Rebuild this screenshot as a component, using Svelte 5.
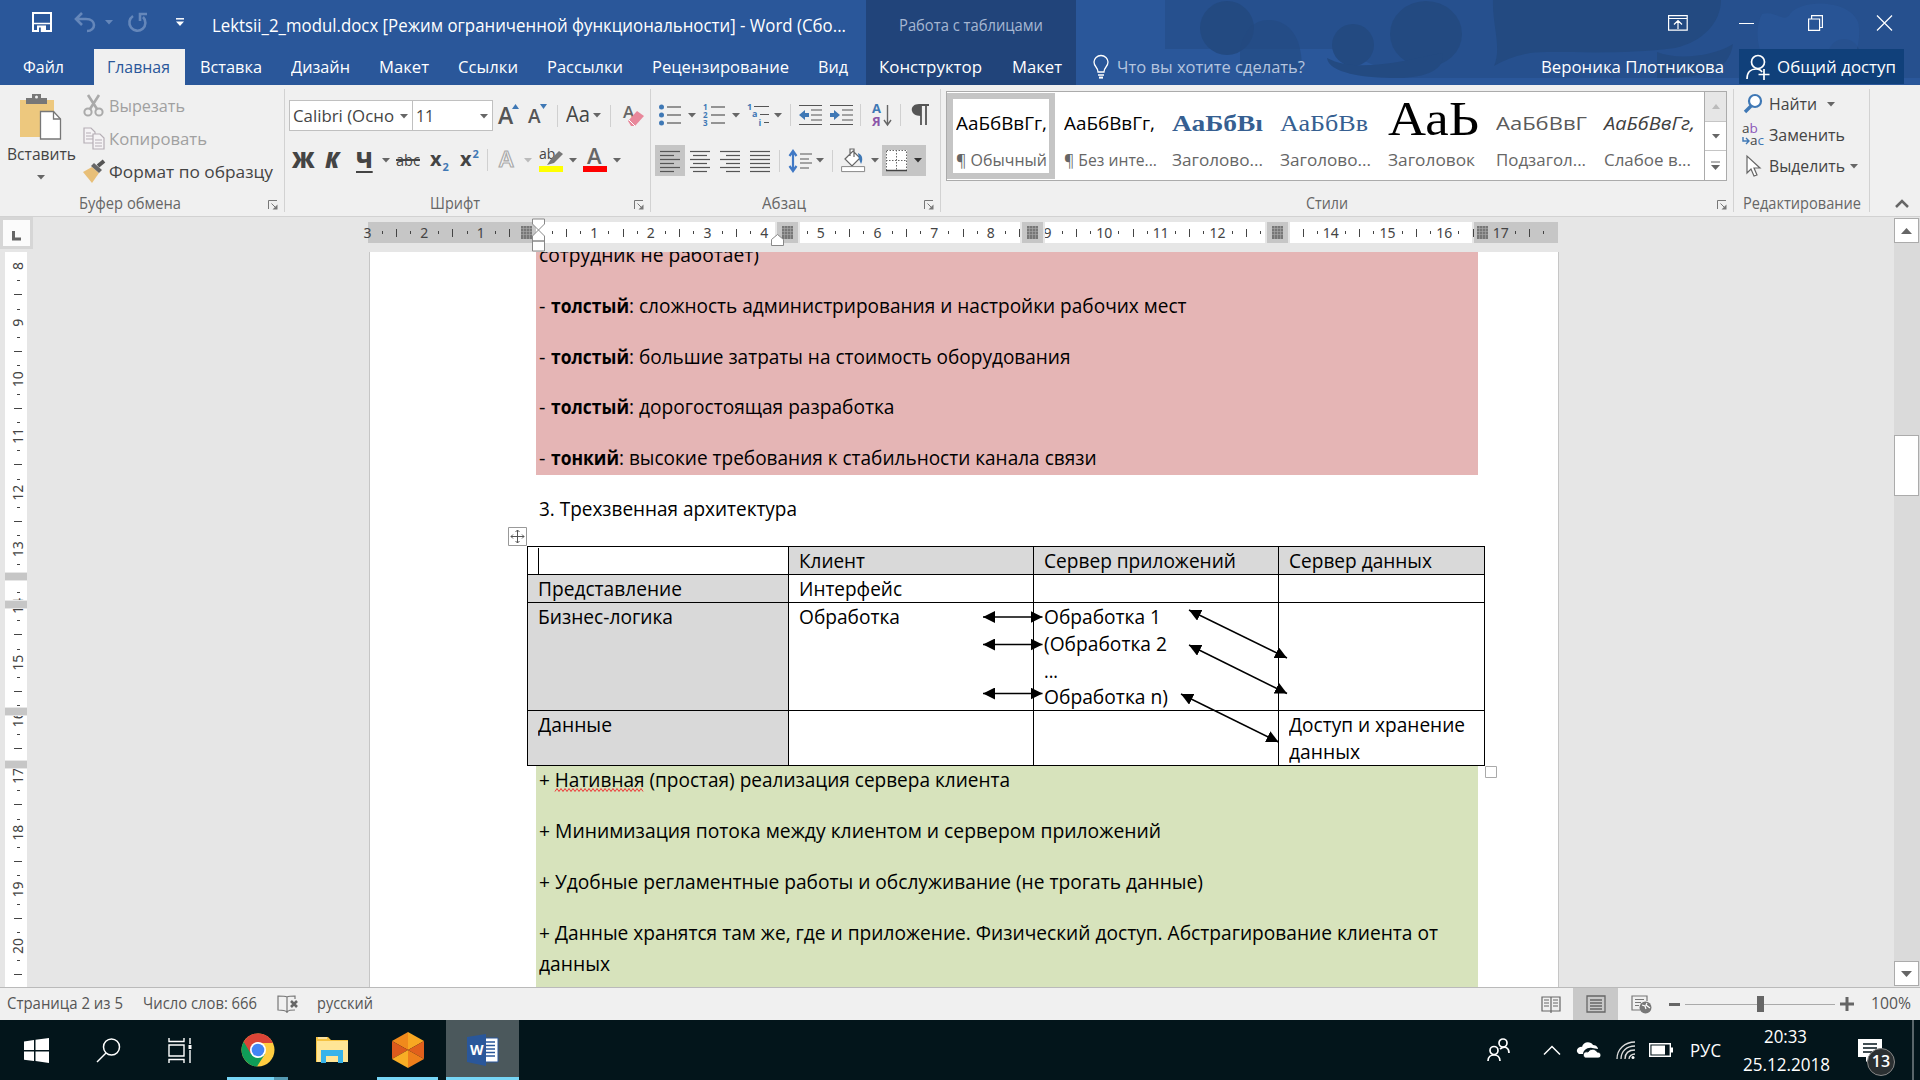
<script>
  // Condenses a label horizontally so it occupies its slot width exactly.
  function fit(node, width) {
    const natural = node.getBoundingClientRect().width;
    if (natural > 0) node.style.transform = `scaleX(${width / natural})`;
  }

  const tabs = [
    { t: 'Вставка', w: 62 }, { t: 'Дизайн', w: 59 }, { t: 'Макет', w: 50 },
    { t: 'Ссылки', w: 60 }, { t: 'Рассылки', w: 76 }, { t: 'Рецензирование', w: 137 }, { t: 'Вид', w: 30 }
  ];
  const styles = [
    { p: 'АаБбВвГг,', pw: 91, n: '¶ Обычный', w: 91, c: 'body sel' },
    { p: 'АаБбВвГг,', pw: 91, n: '¶ Без инте...', w: 93, c: 'body' },
    { p: 'АаБбВı', pw: 91, n: 'Заголово...', w: 91, c: 'h1' },
    { p: 'АаБбВв', pw: 88, n: 'Заголово...', w: 91, c: 'h2' },
    { p: 'АаЬ', pw: 91, n: 'Заголовок', w: 87, c: 'title' },
    { p: 'АаБбВвГ', pw: 91, n: 'Подзагол...', w: 90, c: 'sub' },
    { p: 'АаБбВвГг,', pw: 91, n: 'Слабое в...', w: 87, c: 'weak' }
  ];
  const UNIT = 56.67;
  const hNums = [-3, -2, -1, 1, 2, 3, 4, 5, 6, 7, 8, 9, 10, 11, 12, 14, 15, 16, 17].map((n) => ({ n: Math.abs(n), x: 169.5 + n * UNIT }));
  const hTicks = [];
  for (let q = -11; q <= 71; q++) if (q % 4 !== 0) hTicks.push({ x: Math.round(169.5 + (q * UNIT) / 4), half: q % 2 === 0 });
  const hStops = [409, 654, 899];
  const vNums = [8, 9, 10, 11, 12, 13, 14, 15, 16, 17, 18, 19, 20].map((n) => ({ n, y: 14 + (n - 8) * UNIT }));
  const vTicks = [];
  for (let q = 33; q <= 82; q++) if (q % 4 !== 0) vTicks.push({ y: Math.round(14 + ((q - 32) * UNIT) / 4), half: q % 2 === 0 });
  const vBands = [321, 349, 456, 509];

  const cons = [
    { b: 'толстый', bw: 78, t: ': сложность администрирования и настройки рабочих мест', w: 647 },
    { b: 'толстый', bw: 78, t: ': большие затраты на стоимость оборудования', w: 531 },
    { b: 'толстый', bw: 78, t: ': дорогостоящая разработка', w: 355 },
    { b: 'тонкий', bw: 68, t: ': высокие требования к стабильности канала связи', w: 557 }
  ];
  const arrows = [
    [983, 617, 1042.5, 617], [983, 644.5, 1042.5, 644.5], [983, 693.5, 1042.5, 693.5],
    [1189, 610, 1287, 658], [1189, 645, 1287, 693.5], [1181, 694, 1278.5, 742]
  ];
</script>

{#snippet tx(text, w)}<span class="t" style:width="{w}px"><span use:fit={w}>{text}</span></span>{/snippet}
{#snippet caret(c = '#666')}<svg class="caret" width="8" height="5"><path d="M0 0h8L4 4.6z" fill={c} /></svg>{/snippet}
{#snippet launcher()}<svg class="launcher" width="10" height="10"><path d="M.5 9V.5H9M3.500 3.500 8 8" stroke="#777" fill="none" /><path d="M9.500 4.500v5h-5z" fill="#777" /></svg>{/snippet}
{#snippet sep()}<i class="sep"></i>{/snippet}
{#snippet lines(xs)}<svg width="20" height="22">{#each xs as [a, b], i}<path d="M{a} {i * 4 + 1.5}H{b}" stroke="#555" stroke-width="1.2" />{/each}</svg>{/snippet}

<div class="app">
  <header>
    <svg class="art" width="1920" height="78">
      <path d="M1165 0H1920V78H1400L1340 49H1165z" fill="#264e89" opacity=".75" />
      <g fill="#234a81">
        <ellipse cx="1227" cy="28" rx="27" ry="27" /><path d="M1240 49c5-22 18-34 40-27 18 8 22 27 22 49h-62z" opacity=".6" />
        <ellipse cx="1426" cy="34" rx="36" ry="33" /><circle cx="1353" cy="45" r="21" /><path d="M1327 58c30 16 80 2 115-5 4 16-15 25-45 25-34 0-68-5-70-20z" />
        <path d="M1493 0H1721c0 22-18 42-46 48-60 8-120 2-145 5-15 3-25 7-36 13 8-18-2-42-1-66z" />
        <path d="M1657 52c20 8 55 5 76-8-4 28-30 34-76 34z" /><circle cx="1844" cy="55" r="16" />
      </g>
      <path d="M1762 14c14-4 22 10 28 0 12-16 60-14 68 8 4 14-2 40-14 56h-70c-14-16-22-46-12-64z" fill="#2a579a" opacity=".6" />
    </svg>
    <div class="titlebar">
      <div class="qat">
        <svg width="20" height="20"><path d="M1 1h18v18H1z" fill="none" stroke="#fff" stroke-width="2" /><path d="M2 11.500h16" stroke="#fff" stroke-width="1.500" /><path d="M5 13.500h9V20H5z" fill="#fff" /><path d="M7 15.500h1.800V20H7z" fill="#2a579a" /></svg>
        <svg width="22" height="20" stroke="#6587ba" fill="none" stroke-width="2.600"><path d="M8 1 2 7l6 6M2 7h10c11 0 10 12 1 12" /></svg>
        {@render caret('#6587ba')}
        <svg width="20" height="20" stroke="#6587ba" fill="none" stroke-width="2.600"><path d="M5 4a8 8 0 1 0 10 1M12 9V2h7" /></svg>
        <svg width="8" height="8"><path d="M0 .8h8" stroke="#fff" stroke-width="1.500" /><path d="M0 3.500h8L4 8z" fill="#fff" /></svg>
      </div>
      <div class="doctitle">{@render tx('Lektsii_2_modul.docx [Режим ограниченной функциональности] - Word (Сбо...', 634)}</div>
      <div class="ctx">{@render tx('Работа с таблицами', 144)}</div>
      <div class="win">
        <svg width="20" height="16" stroke="#fff" fill="none" stroke-width="1.200"><path d="M.6.6h18.600v14.600H.6zM.6 3.500h18.600M10 14V6M6 9.500l4-4 4 4" /></svg>
        <svg width="15" height="16" stroke="#fff"><path d="M0 8.500h15" /></svg>
        <svg width="15" height="16" stroke="#fff" fill="none" stroke-width="1.200"><path d="M.6 4h11v11.400H.6zM3.600 4V.6h10.800v11.900h-3" /></svg>
        <svg width="15" height="16" stroke="#fff" stroke-width="1.200"><path d="M0 .5 15 15.500M15 .5 0 15.500" /></svg>
      </div>
    </div>
    <nav>
      <div class="file">{@render tx('Файл', 41)}</div>
      <div class="tab active">{@render tx('Главная', 63)}</div>
      {#each tabs as tab}<div class="tab">{@render tx(tab.t, tab.w)}</div>{/each}
      <div class="ctxtabs">{@render tx('Конструктор', 103)}{@render tx('Макет', 50)}</div>
      <div class="tell">
        <svg width="16" height="24" stroke="#fff" fill="none" stroke-width="1.300"><path d="M5 17c0-5-4-5-4-10a7 6.500 0 0 1 14 0c0 5-4 5-4 10zM5 20h6" /><path d="M6 22.600h4" stroke-width="2" /></svg>
        {@render tx('Что вы хотите сделать?', 188)}
      </div>
      <div class="user">{@render tx('Вероника Плотникова', 183)}</div>
      <div class="share">
        <svg width="24" height="26" stroke="#fff" fill="none" stroke-width="1.700"><circle cx="12" cy="8" r="6.500" /><path d="M1 25c0-7 4-10 9-10 3 0 5 1 6 3M18 15v11M12.500 20.500h11" /></svg>
        {@render tx('Общий доступ', 119)}
      </div>
    </nav>
  </header>

  <section class="ribbon">
    <div class="group clip">
      <div class="clipbody">
        <div class="paste">
          <svg width="42" height="46"><path d="M0 6h34v37H0z" fill="#edc87e" /><path d="M6 4h6V0h9v4h6v6H6z" fill="#777" /><circle cx="16.500" cy="3" r="1.500" fill="#f0f0f0" /><path d="M20.500 17.500h13l7 7.500v20h-20z" fill="#fff" stroke="#777" stroke-width="1.300" /><path d="M33.500 17.500V25h7" fill="none" stroke="#777" stroke-width="1.300" /></svg>
          {@render tx('Вставить', 69)}
          {@render caret()}
        </div>
        <div class="cliplist">
          <div class="dis"><svg width="22" height="23" fill="none" stroke="#aaa" stroke-width="2"><path d="M5 1l9 14M16 1 7 15" stroke-width="2.600" /><circle cx="5" cy="18" r="3.600" /><circle cx="16" cy="18" r="3.600" /></svg>{@render tx('Вырезать', 76)}</div>
          <div class="dis"><svg width="22" height="23" fill="#f5f3f5" stroke="#b5aeb5" stroke-width="1.200"><path d="M1 1h7l4 4v11H1zM3 6h5M3 9h7M3 12h7" /><path d="M10 7h7l4 4v11H10zM12 13h7M12 16h7M12 19h7" /></svg>{@render tx('Копировать', 98)}</div>
          <div><svg width="22" height="23"><path d="M0 12 9 7l7 6-7 10z" fill="#e8bf78" /><path d="M8 6l3-3 8 7-3 3z" fill="#666" /><path d="M15 6 21 1" stroke="#555" stroke-width="4" /></svg>{@render tx('Формат по образцу', 164)}</div>
        </div>
      </div>
      <footer>{@render tx('Буфер обмена', 102)}{@render launcher()}</footer>
    </div>

    <div class="group font">
      <div class="frow1">
        <div class="combo">{@render tx('Calibri (Осно', 101)}{@render caret()}</div>
        <div class="combo size">{@render tx('11', 18)}{@render caret()}</div>
        <b class="big">A<svg width="7" height="5"><path d="M0 5 3.500 0 7 5z" fill="#3f78b5" /></svg></b>
        <b class="big sm">A<svg width="7" height="5"><path d="M0 0h7L3.500 5z" fill="#3f78b5" /></svg></b>
        {@render sep()}
        <span class="aa">{@render tx('Aa', 24)}</span>{@render caret()}
        {@render sep()}
        <svg width="21" height="24"><text x="0" y="14" font-size="17" fill="#666" font-weight="600">A</text><path d="M5 17 14 7l7 5-9 10H8z" fill="#e8879a" /><path d="m6 16 6 6" stroke="#fff" /></svg>
      </div>
      <div class="frow2">
        <b>Ж</b><b class="it">К</b><b class="un">Ч</b>{@render caret()}
        <span class="strike">{@render tx('abc', 24)}</span>
        <b class="x">x<sub>2</sub></b><b class="x">x<sup>2</sup></b>
        {@render sep()}
        <svg width="18" height="24"><text x="0" y="19" font-size="22" font-weight="600" fill="#f8f8f8" stroke="#aaa" stroke-width="1.200">A</text></svg>{@render caret('#bbb')}
        <svg width="24" height="25"><text x="0" y="11" font-size="14" fill="#444">ab</text><path d="M8 17l4-6 8-8 4 3-9 9z" fill="#777" /><path d="M0 18h24v6H0z" fill="#ff0" /></svg>{@render caret()}
        <svg width="24" height="25"><text x="4" y="16" font-size="22" font-weight="600" fill="#666">A</text><path d="M0 18h24v6H0z" fill="red" /></svg>{@render caret()}
      </div>
      <footer>{@render tx('Шрифт', 50)}{@render launcher()}</footer>
    </div>

    <div class="group para">
      <div class="prow1">
        <svg width="22" height="22">{#each [3, 11, 19] as y}<circle cx="2.500" cy={y} r="2.500" fill="#3f78b5" /><path d="M8 {y}h14" stroke="#555" stroke-width="1.200" />{/each}</svg>{@render caret()}
        <svg width="22" height="22">{#each [3, 11, 19] as y, i}<text x="0" y={y + 3} font-size="8" font-weight="700" fill="#3f78b5">{i + 1}</text><path d="M8 {y}h14" stroke="#555" stroke-width="1.200" />{/each}</svg>{@render caret()}
        <svg width="22" height="22" stroke="#555" stroke-width="1.200"><path d="M7 2.500h15M13 10.500h9M17 18.500h5" /><g stroke="none" fill="#3f78b5" font-size="9" font-weight="700"><text x="0" y="6">1</text><text x="5" y="13">a</text><text x="11.500" y="22">i</text></g></svg>{@render caret()}
        {@render sep()}
        <svg width="23" height="22"><path d="M0 1.500h23M12 6h11M12 11h11M12 16h11M0 20.500h23" stroke="#555" stroke-width="1.200" /><path d="M0 11 6 6v3h4v4H6v3z" fill="#3f78b5" /></svg>
        <svg width="23" height="22"><path d="M0 1.500h23M12 6h11M12 11h11M12 16h11M0 20.500h23" stroke="#555" stroke-width="1.200" /><path d="M10 11 4 6v3H0v4h4v3z" fill="#3f78b5" /></svg>
        {@render sep()}
        <svg width="20" height="24"><text x="0" y="10" font-size="13" font-weight="700" fill="#3f78b5">А</text><text x="0" y="23" font-size="13" font-weight="700" fill="#8b55a8">Я</text><path d="M15.500 2v19M12 17l3.500 5 3.500-5" stroke="#666" fill="none" stroke-width="1.400" /></svg>
        {@render sep()}
        <svg width="17" height="22"><path d="M7 1h10M9 1v20M14 1v20" stroke="#555" stroke-width="1.800" fill="none" /><path d="M9 0v12C-3 12-3 0 7 0z" fill="#555" /></svg>
      </div>
      <div class="prow2">
        <div class="on">{@render lines([[0, 20], [0, 14], [0, 20], [0, 14], [0, 20], [0, 14]])}</div>
        <div>{@render lines([[0, 20], [3, 17], [0, 20], [3, 17], [0, 20], [3, 17]])}</div>
        <div>{@render lines([[0, 20], [6, 20], [0, 20], [6, 20], [0, 20], [6, 20]])}</div>
        <div>{@render lines([[0, 20], [0, 20], [0, 20], [0, 20], [0, 20], [0, 20]])}</div>
        {@render sep()}
        <svg width="23" height="24"><path d="M4 2v20M.5 7 4 2l3.500 5M.5 17 4 22l3.500-5" stroke="#3f78c5" stroke-width="2.200" fill="none" /><path d="M11 5h12M11 10h9M11 14h12M11 19h9" stroke="#555" stroke-width="1.200" /></svg>{@render caret()}
        {@render sep()}
        <svg width="24" height="25"><path d="M4 11 12 3l7 7-8 8zM9 8V1h4v8" fill="#fff" stroke="#666" stroke-width="1.200" /><path d="M17 5c5 2 5 7 3 11l-2-5z" fill="#3f78b5" /><path d="M.6 18.600h23v5H.6z" fill="#fff" stroke="#888" /></svg>{@render caret()}
        <div class="on border"><svg width="21" height="22"><path d="M0 0h21v21H0z" fill="#fff" /><path d="M.5.500h20v20H.5zM10.500 0v20M0 10.500h20" fill="none" stroke="#666" stroke-dasharray="1.500 1.500" /><path d="M0 20.500h21" stroke="#444" stroke-width="1.500" /></svg>{@render caret('#333')}</div>
      </div>
      <footer>{@render tx('Абзац', 44)}{@render launcher()}</footer>
    </div>

    <div class="group styles">
      <div class="gallery">
        <div class="tiles">
          {#each styles as s}
            <div class="tile {s.c}"><div class="prev">{@render tx(s.p, s.pw)}</div><div class="name">{@render tx(s.n, s.w)}</div></div>
          {/each}
        </div>
        <div class="gscroll"><div class="off"><svg width="8" height="5"><path d="M0 5h8L4 0z" fill="#bbb" /></svg></div><div>{@render caret()}</div><div><svg width="9" height="9"><path d="M0 1h9" stroke="#666" /><path d="M0 4h9L4.500 9z" fill="#666" /></svg></div></div>
      </div>
      <footer>{@render tx('Стили', 42)}{@render launcher()}</footer>
    </div>

    <div class="group edit">
      <div class="elist">
        <div><svg width="22" height="22"><circle cx="13" cy="8" r="6" fill="#fff" stroke="#3f78b5" stroke-width="2.200" /><path d="M9 13 3 19" stroke="#3f78b5" stroke-width="3.400" /></svg>{@render tx('Найти', 48)}<span class="gap"></span>{@render caret()}</div>
        <div><svg width="22" height="22"><text x="0" y="9" font-size="13.500" fill="#444">a<tspan fill="#8b55b8">b</tspan></text><text x="8" y="21" font-size="13.500" fill="#444">a<tspan fill="#3f78b5">c</tspan></text><path d="M1 13v4h6M4 14l3 3-3 3" stroke="#3f78b5" fill="none" stroke-width="1.400" /></svg>{@render tx('Заменить', 76)}</div>
        <div><svg width="22" height="22"><path d="M5 1v17l4-4 3 7 3-1-3-7h6z" fill="#fff" stroke="#666" stroke-width="1.200" /></svg>{@render tx('Выделить', 76)}{@render caret()}</div>
      </div>
      <footer>{@render tx('Редактирование', 118)}</footer>
    </div>
    <div class="collapse"><svg width="14" height="9"><path d="M1 8l6-6 6 6" fill="none" stroke="#666" stroke-width="2.500" /></svg></div>
  </section>

  <main>
    <aside>
      <div class="tabsel"><svg width="9" height="10"><path d="M1.500 0v8H9" fill="none" stroke="#666" stroke-width="3" /></svg></div>
      <svg class="vruler" width="22" height="735">
        <path d="M0 0h22v735H0z" fill="#fff" />
        {#each vTicks as t}<path d="M{t.half ? 9 : 12} {t.y + 0.500}H{t.half ? 17 : 15}" stroke="#444" />{/each}
        {#each vNums as n}<text transform="translate(17.500 {n.y}) rotate(-90)" text-anchor="middle" font-size="14" fill="#444">{n.n}</text>{/each}
        {#each vBands as y}<path d="M0 {y - 1}h22v9H0z" fill="#e6e6e6" /><path d="M0 {y}h22v7H0z" fill="#c6c6c6" />{/each}
      </svg>
    </aside>
    <div class="sheet">
      <svg class="hruler" width="1190" height="35">
        <path d="M0 5h1190v21H0z" fill="#fff" /><path d="M0 5h168v21H0z" fill="#c6c6c6" />
        <path d="M1104 5h2v21h-2z" fill="#e6e6e6" /><path d="M1106 5h84v21h-84z" fill="#c6c6c6" />
        {#each hTicks as t}<path d="M{t.x + 0.500} {t.half ? 12 : 14}V{t.half ? 20 : 17}" stroke="#444" />{/each}
        {#each hNums as n}<text x={n.x} y="21" text-anchor="middle" font-size="14" fill="#444">{n.n}</text>{/each}
        {#each hStops as x}<path d="M{x - 2} 5h25v21h-25z" fill="#e6e6e6" /><path d="M{x} 5h21v21h-21z" fill="#c6c6c6" />{/each}
        <g fill="#777">{#each [153, 414, 659, 904, 1109] as x}<path d="M{x} 9h11v13h-11z" /><path d="M{x + 2.500} 9v13M{x + 5.500} 9v13M{x + 8.500} 9v13M{x} 11.500h11M{x} 14.500h11M{x} 17.500h11" stroke="#aaa" stroke-width=".6" />{/each}</g>
        <g fill="#fff" stroke="#888"><path d="M164.500 2.500h12v5l-6 6-6-6zM170.500 13.500l6 6v5h-12v-5zM164.500 24.500v10h12v-10z" transform="translate(0 -.5)" /><path d="M409.500 17.500l6 5v6h-12v-6z" /></g>
      </svg>
      <div class="page">
        <div class="pink">
          <p>{@render tx('сотрудник не работает)', 220)}</p>
          {#each cons as c}<p class="row"><span class="dash">-</span><b>{@render tx(c.b, c.bw)}</b>{@render tx(c.t, c.w - c.bw - 11.5)}</p>{/each}
        </div>
        <p class="head">{@render tx('3. Трехзвенная архитектура', 258)}</p>
        <div class="table">
          <div></div><div class="g">{@render tx('Клиент', 66)}</div><div class="g">{@render tx('Сервер приложений', 192)}</div><div class="g">{@render tx('Сервер данных', 143)}</div>
          <div class="g">{@render tx('Представление', 144)}</div><div>{@render tx('Интерфейс', 103)}</div><div></div><div></div>
          <div class="g">{@render tx('Бизнес-логика', 135)}</div><div>{@render tx('Обработка', 101)}</div>
          <div>{@render tx('Обработка 1', 117)}{@render tx('(Обработка 2', 123)}{@render tx('...', 14)}{@render tx('Обработка n)', 124)}</div><div></div>
          <div class="g">{@render tx('Данные', 74)}</div><div></div><div></div><div>{@render tx('Доступ и хранение', 176)}{@render tx('данных', 71)}</div>
        </div>
        <div class="green">
          <p class="first">{@render tx('+ Нативная (простая) реализация сервера клиента', 471)}</p>
          <p>{@render tx('+ Минимизация потока между клиентом и сервером приложений', 622)}</p>
          <p>{@render tx('+ Удобные регламентные работы и обслуживание (не трогать данные)', 664)}</p>
          <p>{@render tx('+ Данные хранятся там же, где и приложение. Физический доступ. Абстрагирование клиента от', 899)}</p>
          <p class="cont">{@render tx('данных', 71)}</p>
        </div>
        <svg class="marks" width="1188" height="735" viewBox="370 252 1188 735">
          <defs><marker id="tip" viewBox="0 0 12 12" refX="12" refY="6" markerWidth="12" markerHeight="12" markerUnits="userSpaceOnUse" orient="auto-start-reverse"><path d="M0 0 12 6 0 12z" /></marker></defs>
          {#each arrows as [a, b, c, d]}<line x1={a} y1={b} x2={c} y2={d} stroke="#000" stroke-width="1.500" marker-start="url(#tip)" marker-end="url(#tip)" />{/each}
          <path d="M538.500 548v26" stroke="#000" />
          <path d="M508.500 527.500h18v18h-18z" fill="#fff" stroke="#999" /><path d="M517.500 530v13M511 536.500h13M515.500 532l2-2 2 2M515.500 541l2 2 2-2M513 534.500l-2 2 2 2M522 534.500l2 2-2 2" stroke="#555" fill="none" />
          <path d="M1485.500 766.500h11v11h-11z" fill="#fff" stroke="#aaa" />
          <path d="M555 791.500{'l2-3 2 3'.repeat(22)}" fill="none" stroke="#e33" />
        </svg>
      </div>
    </div>
    <div class="vscroll"><div class="btn"><svg width="11" height="6"><path d="M0 6h11L5.500 0z" fill="#666" /></svg></div><div class="thumb"></div><div class="btn"><svg width="11" height="6"><path d="M0 0h11L5.500 6z" fill="#666" /></svg></div></div>
  </main>

  <section class="status">
    <div class="sleft">
      {@render tx('Страница 2 из 5', 116)}{@render tx('Число слов: 666', 114)}
      <svg width="22" height="18" fill="none" stroke="#777" stroke-width="1.200"><path d="M10 2v16M10 2C8 1 5 1 1 1v14c4 0 7 0 9 2 2-2 3-2 8-2M10 2c2-1 5-1 8-1v3" /><path d="m14 6 6 6M20 6l-6 6" stroke-width="2.600" stroke="#666" /></svg>
      <span class="lang">{@render tx('русский', 56)}</span>
    </div>
    <div class="sright">
      <svg width="20" height="18" fill="none" stroke="#666" stroke-width="1.200"><path d="M10 2v16M10 2H1v14h9M10 2h9v14h-9M3 5h5M3 8h5M3 11h5M12 5h5M12 8h5M12 11h5" /></svg>
      <div class="view"><svg width="20" height="18" fill="none" stroke="#666" stroke-width="1.300"><path d="M1 1h18v16H1zM4 5h12M4 8h12M4 11h12M4 14h12" /></svg></div>
      <svg width="21" height="19" fill="none" stroke="#777" stroke-width="1.200"><path d="M9 15H1V1h15v5M4 4.500h9M4 7.500h6M4 10.500h4" /><circle cx="14.500" cy="12.500" r="6" fill="#777" stroke="none" /><path d="m11 10 3 1 1 3M16 8l-1 2 4 3" stroke="#fff" /></svg>
      <i class="minus"></i>
      <div class="zoom"><i></i></div>
      <svg width="14" height="14"><path d="M7 0v14M0 7h14" stroke="#666" stroke-width="3" /></svg>
      {@render tx('100%', 40)}
    </div>
  </section>

  <section class="taskbar">
    <div class="task"><svg width="25" height="25" fill="#fff"><path d="M0 3.500 10 2v10H0zM11.500 1.800 25 0v12H11.500zM0 13.500h10v9.500L0 21.700zM11.500 13.500H25V25l-13.500-2z" /></svg></div>
    <div class="task"><svg width="25" height="25" fill="none" stroke="#fff" stroke-width="1.500"><circle cx="15.500" cy="9" r="8" /><path d="M10 15 1 24" /></svg></div>
    <div class="task"><svg width="25" height="25" fill="none" stroke="#fff" stroke-width="1.400"><path d="M1 7h15v11H1zM1 0v3.500h15V0M1 25v-3.500h15V25M22 0v6M22 12v13" /><path d="M22 7v4" stroke-width="3" /></svg></div>
    <div class="task run chrome"><svg width="34" height="34" viewBox="0 0 34 34"><circle cx="17" cy="17" r="16.500" fill="#ffcd40" /><path d="M17 17 2.700 8.800A16.500 16.500 0 0 0 16 33.500L24 21z" fill="#0f9d58" /><path d="M2.700 8.800A16.500 16.500 0 0 1 32 10H17L10 21z" fill="#db4437" /><circle cx="17" cy="17" r="8" fill="#fff" /><circle cx="17" cy="17" r="6.300" fill="#4285f4" /></svg></div>
    <div class="task"><svg width="33" height="28"><path d="M0 1h12l3 3h17v22H0z" fill="#f5c242" /><path d="M1 5h31v21H1z" fill="#ffe596" /><path d="M2 2h9" stroke="#fff" /><path d="M5 27V14h22v13h-5v-7H10v7z" fill="#36b3ea" /></svg></div>
    <div class="task run hex"><svg width="32" height="36"><path d="M16 0 32 9 16 18z" fill="#f8a722" /><path d="M16 0 0 9l16 9z" fill="#f08a1c" /><path d="M0 9v18l16-9z" fill="#dc5a1c" /><path d="M32 9v18l-16-9z" fill="#e2601c" /><path d="M0 27l16 9V18z" fill="#f9ae25" /><path d="m32 27-16 9V18z" fill="#ee7f1b" /></svg></div>
    <div class="task run word"><svg width="32" height="32"><path d="M17 4h14v24H17z" fill="#fff" stroke="#2a579a" /><path d="M19 8h9M19 11.500h9M19 15h9M19 18.500h9M19 22h9" stroke="#2a579a" stroke-width="1.600" /><path d="M0 3 19 0v32L0 28z" fill="#2a579a" /><text x="3" y="21" font-size="14" font-weight="700" fill="#fff">W</text></svg></div>
    <div class="tray">
      <svg width="28" height="24" fill="none" stroke="#fff" stroke-width="1.700"><circle cx="16" cy="5" r="4" /><path d="M13 11c5-4 9-1 9 4" /><circle cx="7" cy="12.500" r="4" /><path d="M1 23c0-8 12-8 12 0" /></svg>
      <svg width="18" height="10" fill="none" stroke="#fff" stroke-width="1.500"><path d="m1 9.500 8-8 8 8" /></svg>
      <svg width="25" height="16" fill="#fff"><path d="M3 12c-5-3 0-8 3-7C7-1 15-1 17 3c4 0 5 3 5 4l-6-1c-5-1-9 3-9 6z" /><path d="M9 16c-4-4 0-7 3-6 3-5 9-2 9 0 5 0 5 6 1 6z" stroke="#03151b" stroke-width=".8" /></svg>
      <svg width="19" height="18" fill="none" stroke="#ddd" stroke-width="1.300"><path d="M1 18C1 8 9 1 19 1M5 18c0-8 6-13 14-13M9 18c0-6 4-9 10-9" /><path d="M13 18c0-3 3-5 6-5" /><circle cx="17" cy="16.500" r="1.500" fill="#fff" stroke="none" /></svg>
      <svg width="24" height="14"><path d="M.7.700h20.600v12.600H.7z" fill="none" stroke="#fff" stroke-width="1.400" /><path d="M2.500 2.500h13.500v9H2.500zM22 4.500h2v5h-2z" fill="#fff" /></svg>
      {@render tx('РУС', 31)}
      <div class="clock">{@render tx('20:33', 43)}{@render tx('25.12.2018', 87)}</div>
      <div class="notif"><svg width="24" height="23"><path d="M0 0h24v18H13l-5 5v-5H0z" fill="#fff" /><path d="M5 5h14M5 9h14M5 13h9" stroke="#03151b" stroke-width="1.300" /></svg><span class="badge">13</span></div>
    </div>
    <i class="desk"></i>
  </section>
</div>

<style>
  :global(body) { margin: 0; overflow: hidden; }
  .app { width: 1920px; height: 1080px; display: flex; flex-direction: column; overflow: hidden; background: #e6e6e6; font: 17px/1 'Open Sans', 'Noto Sans', sans-serif; color: #444; }
  .app * { box-sizing: border-box; }
  svg { display: block; flex: none; overflow: visible; }
  .t { display: block; flex: none; white-space: nowrap; line-height: 26px; height: 26px; }
  .t > span { display: inline-block; transform-origin: 0 50%; }
  p { margin: 0; }

  header { position: relative; height: 85px; background: #2a579a; color: #fff; flex: none; }
  .art { position: absolute; left: 0; top: 0; clip-path: inset(0); }
  .titlebar, nav { position: relative; display: flex; }
  .titlebar { height: 49px; }
  .qat { width: 212px; padding: 12px 0 0 32px; display: grid; grid-template-columns: 42px 31px 23px 48px 8px; height: 32px; align-items: center; }
  .doctitle { width: 654px; padding-top: 11.500px; font-size: 18px; }
  .ctx { width: 210px; background: #21447a; padding: 12px 0 0 33px; font-size: 16px; color: #a6b7d2; }
  .win { flex: 1; display: grid; grid-template-columns: 71px 69px 69px 15px; padding: 15px 0 0 592px; }
  nav { height: 36px; align-items: stretch; }
  nav > div { display: flex; align-items: center; }
  .file { width: 94px; padding-left: 23px; }
  .tab { padding: 0 14.500px; }
  .tab.active { width: 91px; padding: 0 0 0 13px; background: #f0f0f0; color: #2a579a; }
  .ctxtabs { width: 210px; background: #21447a; padding-left: 13px; gap: 30px; margin-left: auto; }
  .tell { padding-left: 17px; gap: 8px; color: #b5c5df; width: 465px; }
  .user { width: 198px; }
  .share { width: 165px; margin: 0 16px 1px 0; padding-left: 7px; gap: 7px; background: #10407a; }

  .ribbon { height: 132px; flex: none; display: flex; background: #f0f0f0; border-bottom: 1px solid #d2d2d2; }
  .group { position: relative; display: flex; flex-direction: column; border-right: 1px solid #d2d2d2; margin: 4px 0; height: 123px; }
  .group footer { display: flex; justify-content: center; margin: auto 0 -3px; height: 22px; font-size: 15.500px; color: #666; align-items: center; }
  .group footer .t { line-height: 22px; height: 24px; }
  .launcher { position: absolute; right: 6px; bottom: 2px; }
  .sep { display: block; width: 1px; height: 22px; background: #d0d0d0; }
  .clip { width: 285px; }
  .clip footer { padding-right: 24px; }
  .clipbody { display: flex; padding-top: 5px; }
  .paste { width: 82px; margin-right: 1px; display: flex; flex-direction: column; align-items: center; }
  .paste .t { margin-top: 1px; } .paste .caret { margin-top: 8px; }
  .cliplist { display: flex; flex-direction: column; gap: 10px; }
  .cliplist div { display: flex; gap: 4px; height: 23px; align-items: center; }
  .dis { color: #a0a0a0; }
  .font { width: 366px; padding-left: 4px; }
  .frow1 { margin-top: 11px; height: 31px; display: grid; grid-template-columns: 123px 86px 30px 29px 9px 27px 17px 13px 21px; align-items: center; }
  .combo { height: 31px; border: 1px solid #c0c0c0; background: #fff; display: flex; align-items: center; padding: 1px 4px 0 3px; justify-content: space-between; margin-right: -1px; }
  .combo.size { width: 81px; }
  .big { font-size: 23px; font-weight: 600; display: flex; align-items: flex-start; color: #555; line-height: 31px; height: 31px; }
  .big svg { margin: 4px 0 0 -1px; }
  .big.sm { font-size: 19px; line-height: 33px; }
  .aa { font-size: 21px; margin-top: -3px; }
  .frow2 { margin: 13px 0 0 3px; height: 31px; display: grid; grid-template-columns: 33px 31px 26px 14px 34px 30px 27px 12px 25px 15px 30px 14px 30px 8px; align-items: center; font-size: 22px; }
  .frow2 b { line-height: 30px; font-weight: 800; height: 32px; } .it { font-style: italic; }
  .un { text-decoration: underline; text-decoration-thickness: 1.500px; text-underline-offset: 3px; }
  .strike { font-size: 17px; }
  .strike > :global(.t > span) { text-decoration: line-through; text-decoration-thickness: 1.500px; }
  .frow2 .x { font-weight: 700; font-size: 20px; white-space: nowrap; }
  .x sub, .x sup { font-size: 11px; line-height: 0; color: #3f78b5; margin-left: 1px; }
  .font footer { padding-right: 30px; }
  .para { width: 290px; }
  .prow1 { margin: 14px 0 0 8px; height: 24px; display: grid; grid-template-columns: 29px 15px 29px 15px 27px 16px 9px 31px 30px 12px 28px 12px 17px; align-items: center; }
  .prow2 { margin: 18px 0 0 4px; height: 31px; display: grid; grid-template-columns: 30px 30px 30px 34px 10px 27px 16px 9px 30px 11px 44px; align-items: center; }
  .prow2 > div { width: 30px; height: 31px; display: flex; align-items: center; justify-content: center; }
  .prow2 .on { background: #c5c5c5; }
  .prow2 .border { width: 44px; justify-content: space-between; padding: 0 4px; }
  .para footer { padding-right: 24px; }
  .styles { width: 793px; padding: 2px 0 0 5px; }
  .gallery { width: 781px; height: 90px; border: 1px solid #ababab; background: #fff; display: flex; }
  .tiles { width: 757px; display: flex; overflow: hidden; }
  .tile { width: 108px; height: 86px; flex: none; padding: 6px 0 0 9px; margin-top: 1px; color: #000; }
  .sel { box-shadow: inset 0 0 0 6px #c5c5c5; }
  .prev { height: 46px; font-size: 17.500px; }
  .prev .t { height: 46px; line-height: 49px; }
  .name { font: 17px 'Open Sans', sans-serif; color: #666; margin-top: 2px; height: 26px; }
  .h1 .prev { font: 700 24px 'Liberation Serif', serif; color: #365f91; }
  .h2 .prev { font: 24px 'Liberation Serif', serif; color: #365f91; }
  .title .prev { font: 48px 'Liberation Serif', serif; }
  .title .prev .t { line-height: 40px; }
  .sub .prev { color: #5a5a5a; }
  .weak .prev { font-style: italic; color: #404040; }
  .gscroll { width: 22px; display: flex; flex-direction: column; border-left: 1px solid #ababab; }
  .gscroll div { flex: 1; display: flex; align-items: center; justify-content: center; border-bottom: 1px solid #c5c5c5; }
  .gscroll div:last-child { border: 0; } .gscroll .off { background: #e6e6e6; }
  .styles footer { padding-right: 26px; }
  .edit { width: 136px; }
  .elist { padding: 4px 0 0 8px; display: flex; flex-direction: column; gap: 9px; }
  .elist div { height: 22px; display: flex; align-items: center; gap: 5px; }
  .gap { width: 0; }
  .collapse { flex: 1; display: flex; align-items: flex-end; padding: 0 0 8px 25px; }

  main { height: 770px; flex: none; display: flex; }
  aside { width: 368px; }
  .tabsel { width: 33px; height: 32px; border: 3px solid #d6d6d6; background: #fbfbfb; display: flex; align-items: center; justify-content: center; margin-bottom: 3px; padding-top: 6px; }
  .vruler { margin-left: 5px; overflow: hidden; }
  .sheet { width: 1526px; }
  .hruler text, .vruler text { font-family: 'Noto Sans', sans-serif; }
  .page { position: relative; margin-left: 1px; width: 1190px; height: 735px; background: #fff; border: solid #c6c6c6; border-width: 0 1px; overflow: hidden; font-size: 20px; color: #000; font-family: 'Open Sans', sans-serif; }
  .pink { margin-left: 166px; width: 942px; height: 223px; background: #e5b5b5; padding-left: 3px; overflow: hidden; }
  .pink p, .green p { height: 50.750px; } .pink .t, .green .t { line-height: 50.750px; height: 50.750px; }
  .pink p:first-child { margin-top: -22px; }
  .row { display: flex; }
  .dash { width: 11.500px; line-height: 50.750px; }
  .head { height: 71px; padding-left: 169px; } .head .t { line-height: 68px; }
  .table { margin-left: 157px; width: 958px; height: 220px; display: grid; grid-template-columns: 261px 245px 245px 206px; grid-template-rows: 28px 28px 108px 55px; border: solid #000; border-width: 1px 0 0 1px; }
  .table > div { border: solid #000; border-width: 0 1px 1px 0; padding-left: 10px; }
  .table .t { height: 26.800px; line-height: 27px; } .table .g { background: #d9d9d9; }
  .green { margin-left: 166px; width: 942px; height: 222px; background: #d7e3bc; padding-left: 3px; }
  .green p.first { height: 40px; } .green p.first .t { line-height: 28px; height: 40px; }
  .green p.cont { height: 26px; margin-top: -7px; } .green p.cont .t { line-height: 26px; height: 26px; }
  .marks { position: absolute; left: 0; top: 0; }
  .vscroll { width: 26px; padding-right: 1px; background: #dadada; margin: 1px 0 1px; display: flex; flex-direction: column; }
  .btn, .thumb { border: 1px solid #ababab; background: #fff; flex: none; }
  .btn { height: 25px; display: flex; align-items: center; justify-content: center; }
  .thumb { height: 61px; margin: 192px 0 465px; }

  .status { height: 33px; flex: none; background: #f0f0f0; border-top: 1px solid #bababa; display: flex; justify-content: space-between; font-size: 15.500px; color: #555; }
  .sleft { display: flex; align-items: center; padding-left: 7px; gap: 20px; } .sleft .t { line-height: 24px; }
  .lang { margin-left: -2px; }
  .sright { display: grid; grid-template-columns: 32px 58px 38px 16px 155px 31px 49px; align-items: center; } .sright .t { line-height: 24px; }
  .view { width: 45px; height: 32px; background: #c8c8c8; display: flex; align-items: center; justify-content: center; }
  .minus { width: 11px; height: 3px; background: #666; }
  .zoom { width: 150px; height: 16px; background: linear-gradient(#aaa, #aaa) 0 8px / 100% 1px no-repeat; display: flex; justify-content: center; }
  .zoom i { width: 7px; height: 16px; background: #666; }

  .taskbar { height: 60px; flex: none; background: #03151b; display: flex; color: #fff; font-size: 17.500px; }
  .task { width: 72px; display: flex; align-items: center; justify-content: center; border-bottom: 3px solid transparent; border-top: 3px solid transparent; }
  .chrome { width: 61px; margin: 0 6px 0 11px; border-image: linear-gradient(90deg, #76d5f5 77%, #5499b2 77%) 0 0 3 0; }
  .chrome + .task { width: 76px; }
  .hex { width: 61px; margin: 0 8px 0 7px; border-bottom-color: #76d5f5; }
  .word { width: 73px; background: #4b585c; border-top-color: #4b585c; border-bottom-color: #76d5f5; }
  .tray { margin-left: auto; display: grid; grid-template-columns: 56px 33px 40px 33px 41px 53px 115px 54px; align-items: center; }
  .tray > .t { line-height: 27px; }
  .clock { display: flex; flex-direction: column; align-items: flex-start; gap: 2px; } .clock .t:first-child { margin-left: 21px; }
  .notif { position: relative; }
  .badge { position: absolute; left: 9px; top: 9px; width: 28px; height: 28px; border-radius: 50%; background: #2b3032; border: 1px solid #888; font: 600 16px/25px 'Open Sans', sans-serif; text-align: center; }
  .desk { width: 8px; border-left: 2px solid #59656a; }
</style>
